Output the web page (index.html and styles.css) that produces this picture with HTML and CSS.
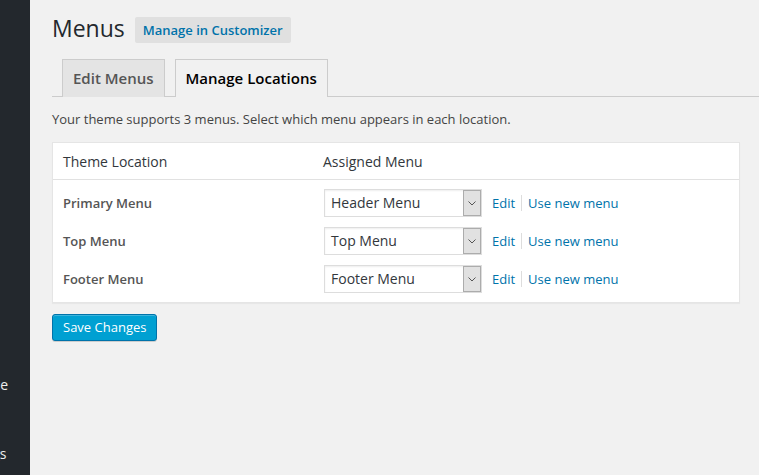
FILE: index.html
```html
<!DOCTYPE html>
<html>
<head>
<meta charset="utf-8">
<link rel="stylesheet" href="styles.css">
</head>
<body>
<div class="layout">
  <nav class="sidebar">
    <div class="side-item side-e"><span>Appearance</span></div>
    <div class="side-item side-s"><span>Settings</span></div>
  </nav>
  <main class="main">
    <div class="title-row">
      <h1 class="title">Menus</h1>
      <a class="title-action">Manage in Customizer</a>
    </div>
    <div class="tabs">
      <a class="tab">Edit Menus</a>
      <a class="tab tab-active">Manage Locations</a>
    </div>
    <p class="desc">Your theme supports 3 menus. Select which menu appears in each location.</p>
    <div class="locations">
      <div class="loc-head">
        <div class="col1">Theme Location</div>
        <div class="col2">Assigned Menu</div>
      </div>
      <div class="loc-body">
        <div class="loc-row">
          <div class="col1 label">Primary Menu</div>
          <div class="col2 controls">
            <div class="select"><span class="select-text">Header Menu</span><span class="select-arrow"><svg width="8" height="5" viewBox="0 0 8 5"><path d="M0.5 0.5 L4 4 L7.5 0.5" fill="none" stroke="#555" stroke-width="1"/></svg></span></div>
            <a class="link">Edit</a><span class="sep"></span><a class="link">Use new menu</a>
          </div>
        </div>
        <div class="loc-row">
          <div class="col1 label">Top Menu</div>
          <div class="col2 controls">
            <div class="select"><span class="select-text">Top Menu</span><span class="select-arrow"><svg width="8" height="5" viewBox="0 0 8 5"><path d="M0.5 0.5 L4 4 L7.5 0.5" fill="none" stroke="#555" stroke-width="1"/></svg></span></div>
            <a class="link">Edit</a><span class="sep"></span><a class="link">Use new menu</a>
          </div>
        </div>
        <div class="loc-row">
          <div class="col1 label">Footer Menu</div>
          <div class="col2 controls">
            <div class="select"><span class="select-text">Footer Menu</span><span class="select-arrow"><svg width="8" height="5" viewBox="0 0 8 5"><path d="M0.5 0.5 L4 4 L7.5 0.5" fill="none" stroke="#555" stroke-width="1"/></svg></span></div>
            <a class="link">Edit</a><span class="sep"></span><a class="link">Use new menu</a>
          </div>
        </div>
      </div>
    </div>
    <button class="save">Save Changes</button>
  </main>
</div>
</body>
</html>
```
FILE: styles.css
```css
html, body {
  margin: 0;
  padding: 0;
  height: 100%;
  background: #f1f1f1;
  font-family: "Open Sans", "Noto Sans", sans-serif;
  color: #444;
  overflow: hidden;
}
.layout {
  display: flex;
  height: 475px;
}
.sidebar {
  width: 30px;
  flex: none;
  background: #23282d;
  overflow: hidden;
  display: flex;
  flex-direction: column;
}
.side-item {
  display: flex;
  justify-content: flex-end;
  white-space: nowrap;
  font-size: 14px;
  line-height: 18px;
  color: #eee;
}
.side-e { margin-top: 376px; width: 8px; }
.side-s { margin-top: 51px; width: 6.5px; }
.main {
  flex: 1;
  min-width: 0;
  padding: 0 19px 0 22px;
}
.title-row {
  display: flex;
  align-items: flex-start;
  padding-top: 14px;
}
.title {
  margin: 0;
  font-size: 23px;
  font-weight: 400;
  line-height: 29px;
  color: #23282d;
}
.title-action {
  margin: 3px 0 0 10px;
  padding: 0 8px;
  height: 26px;
  line-height: 26px;
  font-size: 13px;
  font-weight: 600;
  color: #0073aa;
  background: #e0e0e0;
  border-radius: 2px;
}
.tabs {
  display: flex;
  gap: 10px;
  margin-top: 16px;
  margin-right: -19px;
  padding-left: 10px;
  border-bottom: 1px solid #ccc;
  height: 37px;
}
.tab {
  box-sizing: border-box;
  height: 38px;
  padding: 0 10px;
  border: 1px solid #ccc;
  border-bottom: none;
  background: #e4e4e4;
  font-size: 15px;
  font-weight: 600;
  line-height: 36px;
  color: #555;
}
.tab-active {
  background: #f1f1f1;
  color: #000;
  height: 38px;
  position: relative;
  z-index: 1;
}
.desc {
  margin: 13px 0 0;
  font-size: 13px;
  line-height: 18px;
  color: #444;
}
.locations {
  margin-top: 14px;
  background: #fff;
  border: 1px solid #e5e5e5;
  box-shadow: 0 1px 1px rgba(0,0,0,0.04);
}
.loc-head {
  display: flex;
  height: 36px;
  align-items: center;
  border-bottom: 1px solid #e1e1e1;
  font-size: 14px;
  color: #32373c;
}
.col1 {
  width: 260px;
  box-sizing: border-box;
  padding-left: 10px;
  flex: none;
}
.col2 {
  padding-left: 10px;
}
.loc-body {
  padding: 4px 0;
}
.loc-row {
  display: flex;
  align-items: center;
  height: 38px;
}
.label {
  font-size: 13px;
  font-weight: 600;
  color: #555;
}
.controls {
  display: flex;
  align-items: center;
  padding-left: 11px;
}
.select {
  box-sizing: border-box;
  width: 158px;
  height: 28px;
  display: flex;
  border: 1px solid #ddd;
  box-shadow: inset 0 1px 2px rgba(0,0,0,0.07);
  background: #fff;
}
.select-text {
  flex: 1;
  padding-left: 6px;
  font-size: 14px;
  line-height: 26px;
  color: #32373c;
}
.select-arrow {
  box-sizing: border-box;
  width: 18px;
  height: 26px;
  background: #e1e1e1;
  border: 1px solid #acacac;
  display: flex;
  align-items: center;
  justify-content: center;
}
.link {
  font-size: 13px;
  color: #0073aa;
}
.controls .link:first-of-type {
  margin-left: 10px;
}
.sep {
  width: 1px;
  height: 16px;
  background: #ddd;
  margin: 0 6px;
}
.save {
  margin-top: 11px;
  height: 27px;
  padding: 0 10px;
  font-family: "Open Sans", "Noto Sans", sans-serif;
  font-size: 13px;
  color: #fff;
  background: #00a0d2;
  border: 1px solid #0073aa;
  border-radius: 3px;
  box-shadow: inset 0 1px 0 rgba(120,200,230,0.5), 0 1px 0 rgba(0,0,0,0.15);
  line-height: 25px;
}
```
